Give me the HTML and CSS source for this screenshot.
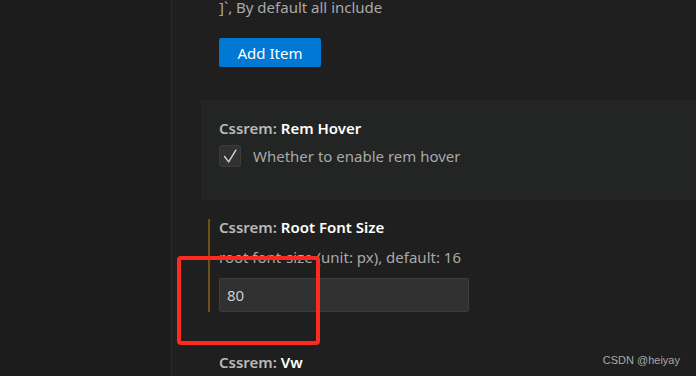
FILE: index.html
```html
<!DOCTYPE html>
<html lang="en">
<head>
    <meta charset="UTF-8">
    <meta name="viewport" content="width=device-width, initial-scale=1.0">
    <title>Settings - Cssrem</title>
    <link rel="stylesheet" href="styles.css">
</head>
<body>
    <div class="workbench">
        <aside class="toc"></aside>

        <main class="settings-list">
            <!-- tail of the previous setting (array editor) -->
            <div class="setting setting-partial">
                <div class="setting-body">
                    <p class="setting-desc first-line">]`, By default all include</p>
                    <button class="add-button">Add Item</button>
                </div>
            </div>

            <div class="setting hovered">
                <div class="setting-body">
                    <div class="setting-title"><span class="category">Cssrem: </span>Rem Hover</div>
                    <label class="checkbox-row">
                        <span class="checkbox">
                            <svg viewBox="0 0 22 22" fill="none" stroke="currentColor" stroke-width="1.6" stroke-linecap="round" stroke-linejoin="round">
                                <polyline points="5 11.5 9.5 17.5 17.5 4.5"></polyline>
                            </svg>
                        </span>
                        <span class="checkbox-label">Whether to enable rem hover</span>
                    </label>
                </div>
            </div>

            <div class="setting">
                <div class="setting-body modified">
                    <div class="setting-title"><span class="category">Cssrem: </span>Root Font Size</div>
                    <p class="setting-desc">root font-size (unit: px), default: 16</p>
                    <input class="text-input" type="text" value="80">
                </div>
            </div>

            <div class="setting">
                <div class="setting-body">
                    <div class="setting-title"><span class="category">Cssrem: </span>Vw</div>
                </div>
            </div>
        </main>
    </div>

    <!-- screenshot annotations -->
    <div class="highlight-box"></div>
    <div class="watermark">CSDN @heiyay</div>
</body>
</html>
```

FILE: styles.css
```css
:root {
    --sidebar-bg: #1c1c1c;
    --editor-bg: #1f1f1f;
    --hover-bg: #232424;
    --divider: #2b2b2b;
    --text-primary: #ffffff;
    --text-muted: #b9b9b9;
    --text-desc: #a9a9a9;
    --button-bg: #0078d4;
    --input-bg: #313131;
    --input-border: #3c3c3c;
    --modified: #6e5017;
}

* {
    margin: 0;
    padding: 0;
    box-sizing: border-box;
}

body {
    font-family: 'Noto Sans', 'Open Sans', Arial, sans-serif;
    font-size: 15px;
    background-color: var(--editor-bg);
    color: var(--text-desc);
    height: 100vh;
    overflow: hidden;
    position: relative;
}

.workbench {
    display: flex;
    height: 100%;
}

.toc {
    width: 172px;
    flex-shrink: 0;
    background-color: var(--sidebar-bg);
    border-right: 1px solid var(--divider);
}

.settings-list {
    flex: 1;
    padding-left: 29px;
}

.setting {
    padding: 19px 0 23px;
}

.setting-body {
    margin-left: 7px;
    padding-left: 9px;
    border-left: 2px solid transparent;
}

.setting-body.modified {
    border-left-color: var(--modified);
}

.setting-partial {
    padding: 0 0 33px;
}

.setting.hovered {
    background-color: var(--hover-bg);
    padding: 20px 0 33px;
}

.setting-title {
    font-weight: 600;
    line-height: 16px;
    color: var(--text-primary);
}

.setting-title .category {
    color: var(--text-muted);
}

.setting-desc {
    line-height: 18px;
    margin-top: 13px;
    color: var(--text-desc);
}

.setting-desc.first-line {
    margin-top: -2px;
}

.add-button {
    display: block;
    margin-top: 22px;
    height: 29px;
    width: 102px;
    background-color: var(--button-bg);
    color: #ffffff;
    border: none;
    border-radius: 2px;
    font-family: inherit;
    font-size: 15px;
}

.checkbox-row {
    display: flex;
    align-items: center;
    gap: 12px;
    margin-top: 9px;
}

.checkbox {
    width: 22px;
    height: 22px;
    background-color: var(--input-bg);
    border: 1px solid var(--input-border);
    border-radius: 3px;
    color: #d0d0d0;
    display: flex;
}

.checkbox svg {
    width: 20px;
    height: 20px;
}

.checkbox-label {
    line-height: 18px;
}

.text-input {
    display: block;
    margin-top: 12px;
    width: 250px;
    height: 34px;
    padding: 0 7px;
    background-color: var(--input-bg);
    border: 1px solid var(--input-border);
    border-radius: 2px;
    color: #cccccc;
    font-family: inherit;
    font-size: 15px;
}

.highlight-box {
    position: absolute;
    left: 177px;
    top: 256px;
    width: 143px;
    height: 89px;
    border: 4px solid #ff2a1f;
    border-radius: 4px;
}

.watermark {
    position: absolute;
    right: 16px;
    bottom: 10px;
    font-family: 'Liberation Sans', Arial, sans-serif;
    font-size: 11px;
    color: #a8a8a8;
}
```
